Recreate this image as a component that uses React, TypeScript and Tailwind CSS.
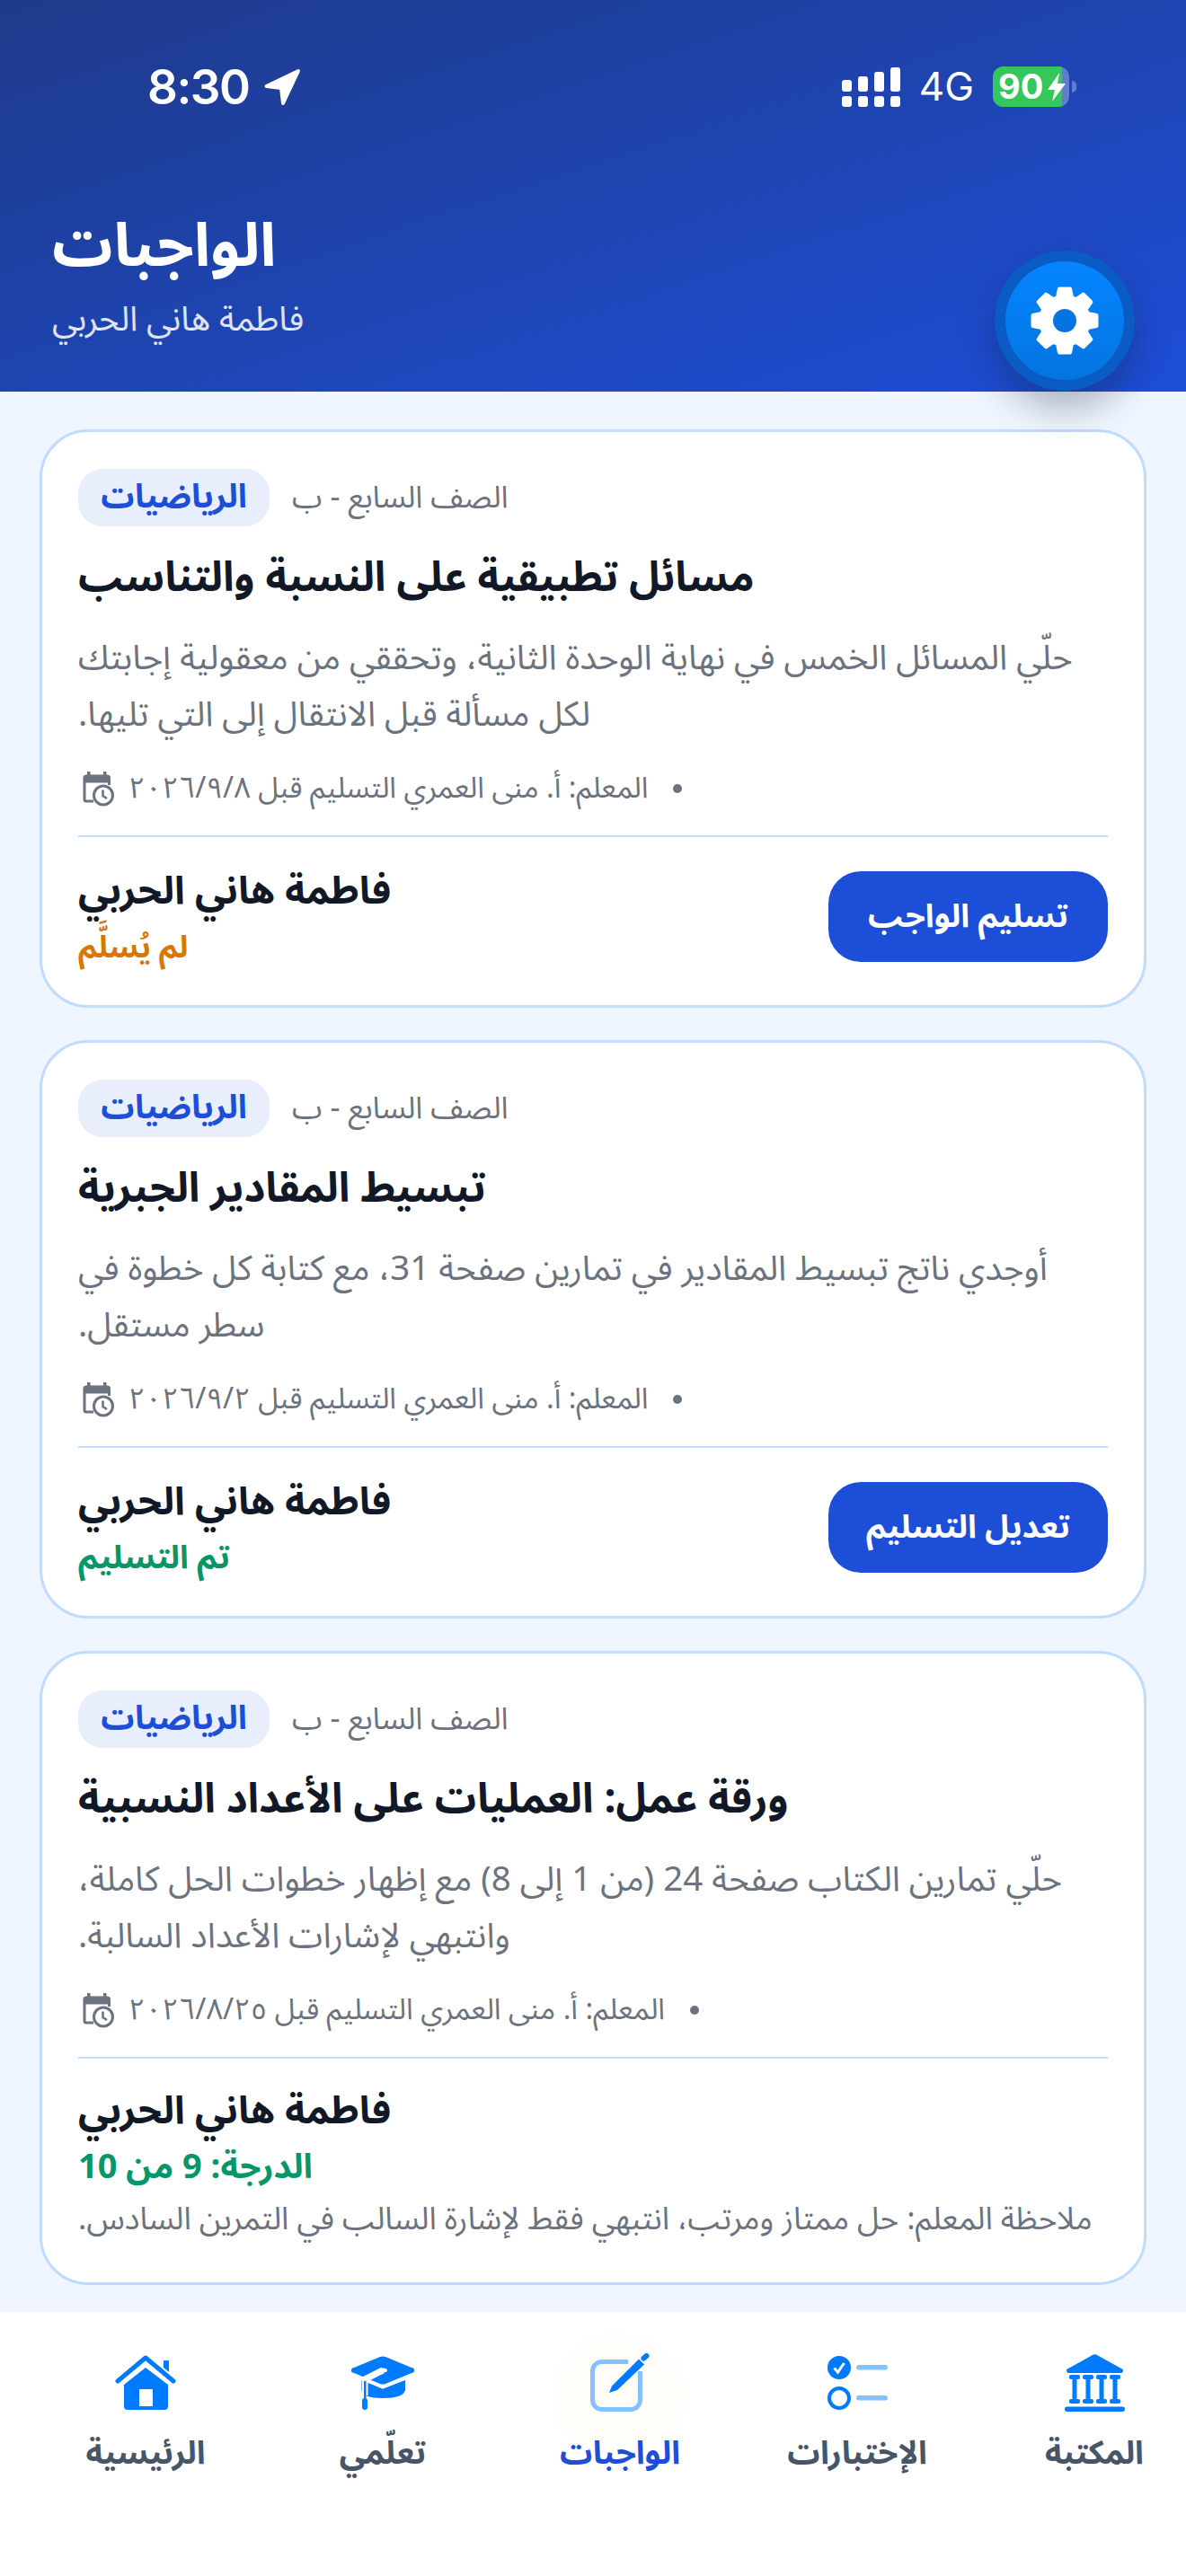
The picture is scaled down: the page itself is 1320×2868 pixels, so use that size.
import type { ReactNode } from "react";

const AR = "font-['Noto_Sans_Arabic','Noto_Naskh_Arabic','DejaVu_Sans',sans-serif]";

type Assignment = {
  title: string;
  desc: string[];
  date: string;
  status: string;
  action?: string;
};

// 8 teeth gear, same outline as the settings button
function gearPath() {
  const pts: string[] = [];
  for (let i = 0; i < 8; i++) {
    const a = (i * Math.PI) / 4 - Math.PI / 2;
    const p = (r: number, d: number) =>
      `${(40 + r * Math.cos(a + d)).toFixed(2)} ${(40 + r * Math.sin(a + d)).toFixed(2)}`;
    pts.push(p(27, -0.3), p(36, -0.17), p(36, 0.17), p(27, 0.3));
  }
  return "M" + pts.join("L") + "Z";
}

function Gear() {
  return (
    <svg viewBox="0 0 80 80" className="h-[80px] w-[80px]">
      <path d={gearPath()} fill="#fff" stroke="#fff" strokeWidth="4" strokeLinejoin="round" />
      <circle cx="40" cy="40" r="13" fill="#0474e0" />
    </svg>
  );
}

function CalendarClock() {
  return (
    <svg viewBox="0 0 35 39" className="ml-[5px] h-[39px] w-[35px] shrink-0" fill="none">
      <rect x="5" y="0" width="3.500" height="6" fill="#6b7280" />
      <rect x="23" y="0" width="3.500" height="6" fill="#6b7280" />
      <path d="M4 3.500h23.500a3.500 3.500 0 0 1 3.500 3.500v5.500H0.500V7a3.500 3.500 0 0 1 3.500-3.500z" fill="#6b7280" />
      <path d="M2 12v19a2 2 0 0 0 2 2h8M29.500 12v3" stroke="#6b7280" strokeWidth="3" />
      <circle cx="23" cy="26.500" r="10.500" stroke="#6b7280" strokeWidth="3" fill="#fff" />
      <path d="M22.500 20.500v6.500l4.500 3" stroke="#6b7280" strokeWidth="2.500" />
    </svg>
  );
}

function Card({ title, desc, date, status, action }: Assignment) {
  return (
    <div className="rounded-[54px] border-[3px] border-[#bfdbfe] bg-white px-[40px] pt-[41px] pb-[36px]">
      <div className="flex items-center gap-[25px]">
        <span className="flex h-[64px] w-[213px] items-center justify-center rounded-[27px] bg-[#e8eefb] text-[37px] font-bold text-[#1d4ed8]">
          الرياضيات
        </span>
        <span className="text-[34px] text-[#6b7280]">الصف السابع - ب</span>
      </div>
      <h2 dir="rtl" className="mt-[23px] text-left text-[46px] leading-[70px] font-bold text-[#111827]">
        {title}
      </h2>
      <div dir="rtl" className="mt-[22px] text-left text-[38.5px] leading-[63px] text-[#6b7280]">
        {desc.map((l) => (
          <p key={l}>{l}</p>
        ))}
      </div>
      <div className="mt-[29px] flex h-[44px] items-center gap-[16px] text-[32.5px] text-[#6b7280]">
        <CalendarClock />
        <span dir="rtl">المعلم: أ. منى العمري التسليم قبل {date}</span>
        <span className="ml-[12px] h-[10px] w-[10px] rounded-full bg-[#6b7280]" />
      </div>
      <div className="mt-[30px] h-[2px] bg-[#bfdbfe]" />
      {action ? (
        <div className="mt-[38px] mb-[12px] flex h-[101px] items-center justify-between">
          <div className="pt-[6px]">
            <div dir="rtl" className="text-left text-[43px] leading-[62px] font-bold text-[#111827]">فاطمة هاني الحربي</div>
            <div dir="rtl" className={status === "تم التسليم" ? "text-left text-[36px] leading-[62px] font-bold text-[#059669]" : "text-left text-[34px] leading-[62px] font-bold text-[#d97706]"}>
              {status}
            </div>
          </div>
          <button className="flex h-[101px] w-[311px] items-center justify-center rounded-[36px] bg-[#1d4ed8] text-[36px] font-bold text-white">
            {action}
          </button>
        </div>
      ) : (
        <div dir="rtl" className="mt-[28px] mb-[9px] text-left">
          <div className="text-[43px] leading-[62px] font-bold text-[#111827]">فاطمة هاني الحربي</div>
          <div className="text-[38px] leading-[62px] font-bold text-[#059669]">{status}</div>
          <div className="mt-[2px] text-[35px] leading-[50px] text-[#6b7280]">
            ملاحظة المعلم: حل ممتاز ومرتب، انتبهي فقط لإشارة السالب في التمرين السادس.
          </div>
        </div>
      )}
    </div>
  );
}

function HomeIcon() {
  return (
    <svg viewBox="0 0 68 62" className="h-[62px] w-[68px]">
      <path d="M34 14 L10 33 V57 a4 4 0 0 0 4 4 H55 a4 4 0 0 0 4-4 V33 Z" fill="#007aff" />
      <rect x="27" y="38" width="15" height="19" fill="#fff" />
      <rect x="54" y="6" width="6" height="18" rx="1" fill="#007aff" />
      <path d="M3 29 L34 3 L65 29" stroke="#fff" strokeWidth="9" fill="none" />
      <path d="M3 29 L34 3 L65 29" stroke="#007aff" strokeWidth="5" fill="none" strokeLinecap="round" strokeLinejoin="round" />
    </svg>
  );
}

function CapIcon() {
  return (
    <svg viewBox="0 0 70 60" className="h-[60px] w-[70px]" fill="none">
      <path d="M11 27 L35 36 L60 27 V38 Q58 47 35 47 Q13 47 11 38 Z" fill="#007aff" />
      <path d="M11 24 L35 34 L60 24" stroke="#fff" strokeWidth="5" />
      <path d="M32 1 a8 8 0 0 1 6 0 L67 13 a3 3 0 0 1 0 6 L38 31 a8 8 0 0 1-6 0 L3 19 a3 3 0 0 1 0-6 Z" fill="#007aff" />
      <path d="M35 16 L15 26 V44" stroke="#fff" strokeWidth="7" />
      <path d="M35 16 L15 26" stroke="#fff" strokeWidth="2.500" />
      <ellipse cx="35" cy="16" rx="5" ry="2.500" fill="#fff" />
      <rect x="14" y="28" width="2.500" height="20" fill="#007aff" />
      <rect x="12" y="47" width="6" height="13" rx="3" fill="#007aff" />
    </svg>
  );
}

function EditIcon() {
  return (
    <svg viewBox="0 0 68 66" className="h-[66px] w-[68px]" fill="none">
      <path
        d="M43 9.500 H14 a10.500 10.500 0 0 0-10.500 10.500 V52 a10.500 10.500 0 0 0 10.500 10.500 H46 a10.500 10.500 0 0 0 10.500-10.500 V20"
        stroke="#84c2ff"
        strokeWidth="5"
      />
      <path d="M22 44 L25 36.500 L55 6.500 L61 12.500 L31 41 Z" fill="#007aff" />
      <path d="M60.500 5.500 L63.500 3" stroke="#007aff" strokeWidth="6" strokeLinecap="round" />
    </svg>
  );
}

function QuizIcon() {
  return (
    <svg viewBox="0 0 67 60" className="h-[60px] w-[67px]" fill="none">
      <circle cx="13" cy="13" r="13" fill="#007aff" />
      <path d="M7.500 13.500l4 4.500 7-10" stroke="#fff" strokeWidth="3" />
      <circle cx="13" cy="47" r="11" stroke="#007aff" strokeWidth="4" />
      <rect x="32" y="10" width="35" height="5.500" rx="2.700" fill="#84c2ff" />
      <rect x="32" y="44" width="35" height="5.500" rx="2.700" fill="#84c2ff" />
    </svg>
  );
}

function LibraryIcon() {
  const cols = [11, 26, 41, 56];
  return (
    <svg viewBox="0 0 67 64" className="h-[64px] w-[67px]" fill="#007aff">
      <path d="M31 1 a5 5 0 0 1 5 0 L63 16 a2.500 2.500 0 0 1-1 5 H5 a2.500 2.500 0 0 1-1-5 Z" />
      {cols.map((x) => (
        <g key={x}>
          <rect x={x - 6} y="23" width="12" height="5" rx="2" />
          <rect x={x - 2.5} y="25" width="5" height="28" />
          <rect x={x - 6} y="50" width="12" height="5" rx="2" />
        </g>
      ))}
      <rect x="0" y="58.500" width="67" height="5.500" rx="2.700" />
    </svg>
  );
}

function NavItem({ label, active, children }: { label: string; active?: boolean; children: ReactNode }) {
  return (
    <div className={active ? "flex h-[190px] w-[200px] flex-col items-center bg-[radial-gradient(closest-side,#fffcf5,#ffffff)] pt-[46px]" : "flex h-[190px] w-[200px] flex-col items-center pt-[46px]"}>
      <div className="flex h-[66px] items-center justify-center">{children}</div>
      <span className={active ? "mt-[19px] text-[36px] font-bold text-[#1d4ed8]" : "mt-[19px] text-[36px] font-bold text-[#475569]"}>{label}</span>
    </div>
  );
}

export default function App() {
  return (
    <div className={`flex h-[2868px] w-[1320px] flex-col overflow-hidden bg-[#eff6ff] ${AR}`}>
      <header className="relative h-[436px] shrink-0 bg-gradient-to-br from-[#1e3a8a] to-[#1d4ed8]">
        <div className="flex items-start justify-between pt-[74px] pr-[122px] pl-[164px]">
          <div className="flex items-center gap-[15px] text-white">
            <span className="font-['Inter'] text-[53px] leading-[46px] font-semibold tracking-[-1.5px]">8:30</span>
            <svg viewBox="0 0 42 42" className="h-[42px] w-[42px]" fill="#fff" stroke="#fff" strokeWidth="4" strokeLinejoin="round">
              <path d="M39 3 L3.500 20 L20 22 L22 39 Z" />
            </svg>
          </div>
          <div className="flex items-center text-white">
            <div className="grid grid-cols-4 items-end gap-x-[7px] gap-y-[5px]">
              <div className="h-[13px] w-[11px] rounded-[3px] bg-white" />
              <div className="h-[17px] w-[11px] rounded-[3px] bg-white" />
              <div className="h-[22px] w-[11px] rounded-[3px] bg-white" />
              <div className="h-[27px] w-[11px] rounded-[3px] bg-white" />
              <div className="h-[12px] w-[11px] rounded-[3px] bg-white" />
              <div className="h-[12px] w-[11px] rounded-[3px] bg-white" />
              <div className="h-[12px] w-[11px] rounded-[3px] bg-white" />
              <div className="h-[12px] w-[11px] rounded-[3px] bg-white" />
            </div>
            <span className="ml-[21px] font-['Inter'] text-[44px] leading-[45px]">4G</span>
            <div className="relative ml-[21px] flex h-[45px] w-[85px] overflow-hidden rounded-[12px] bg-white/30">
              <div className="h-full w-[77px] bg-[#34c759]" />
              <span className="absolute top-0 left-[6px] font-['Inter'] text-[38px] leading-[45px] font-bold text-white">90</span>
              <svg viewBox="0 0 20 32" className="absolute top-[7px] left-[61px] h-[32px] w-[20px]" fill="#fff">
                <path d="M13 0 L0 19 H8 L5 32 L20 12 H11 Z" />
              </svg>
            </div>
            <div className="ml-[3px] h-[13px] w-[5px] rounded-r-full bg-white/30" />
          </div>
        </div>
        <h1 className="mt-[115px] pl-[58px] text-[67px] leading-[80px] font-bold text-white">الواجبات</h1>
        <p className="mt-[18px] pl-[58px] text-[38px] leading-[46px] text-white/85">فاطمة هاني الحربي</p>
        <div className="absolute top-[279px] left-[1107px] flex h-[156px] w-[156px] items-center justify-center rounded-full bg-[#0a5bc4] shadow-[0_20px_40px_rgba(15,23,42,0.3)]">
          <div className="flex h-[132px] w-[132px] items-center justify-center rounded-full bg-gradient-to-b from-[#0585ff] to-[#0474e0]">
            <Gear />
          </div>
        </div>
      </header>

      <main className="flex flex-1 flex-col gap-[36px] px-[44px] pt-[42px]">
        <Card
          title="مسائل تطبيقية على النسبة والتناسب"
          desc={["حلّي المسائل الخمس في نهاية الوحدة الثانية، وتحققي من معقولية إجابتك", "لكل مسألة قبل الانتقال إلى التي تليها."]}
          date="٢٠٢٦/٩/٨"
          status="لم يُسلَّم"
          action="تسليم الواجب"
        />
        <Card
          title="تبسيط المقادير الجبرية"
          desc={["أوجدي ناتج تبسيط المقادير في تمارين صفحة 31، مع كتابة كل خطوة في", "سطر مستقل."]}
          date="٢٠٢٦/٩/٢"
          status="تم التسليم"
          action="تعديل التسليم"
        />
        <Card
          title="ورقة عمل: العمليات على الأعداد النسبية"
          desc={["حلّي تمارين الكتاب صفحة 24 (من 1 إلى 8) مع إظهار خطوات الحل كاملة،", "وانتبهي لإشارات الأعداد السالبة."]}
          date="٢٠٢٦/٨/٢٥"
          status="الدرجة: 9 من 10"
        />
      </main>

      <nav className="flex h-[294px] shrink-0 gap-[64px] bg-white pl-[62px]">
        <NavItem label="الرئيسية"><HomeIcon /></NavItem>
        <NavItem label="تعلّمي"><CapIcon /></NavItem>
        <NavItem label="الواجبات" active><EditIcon /></NavItem>
        <NavItem label="الإختبارات"><QuizIcon /></NavItem>
        <NavItem label="المكتبة"><LibraryIcon /></NavItem>
      </nav>
    </div>
  );
}
